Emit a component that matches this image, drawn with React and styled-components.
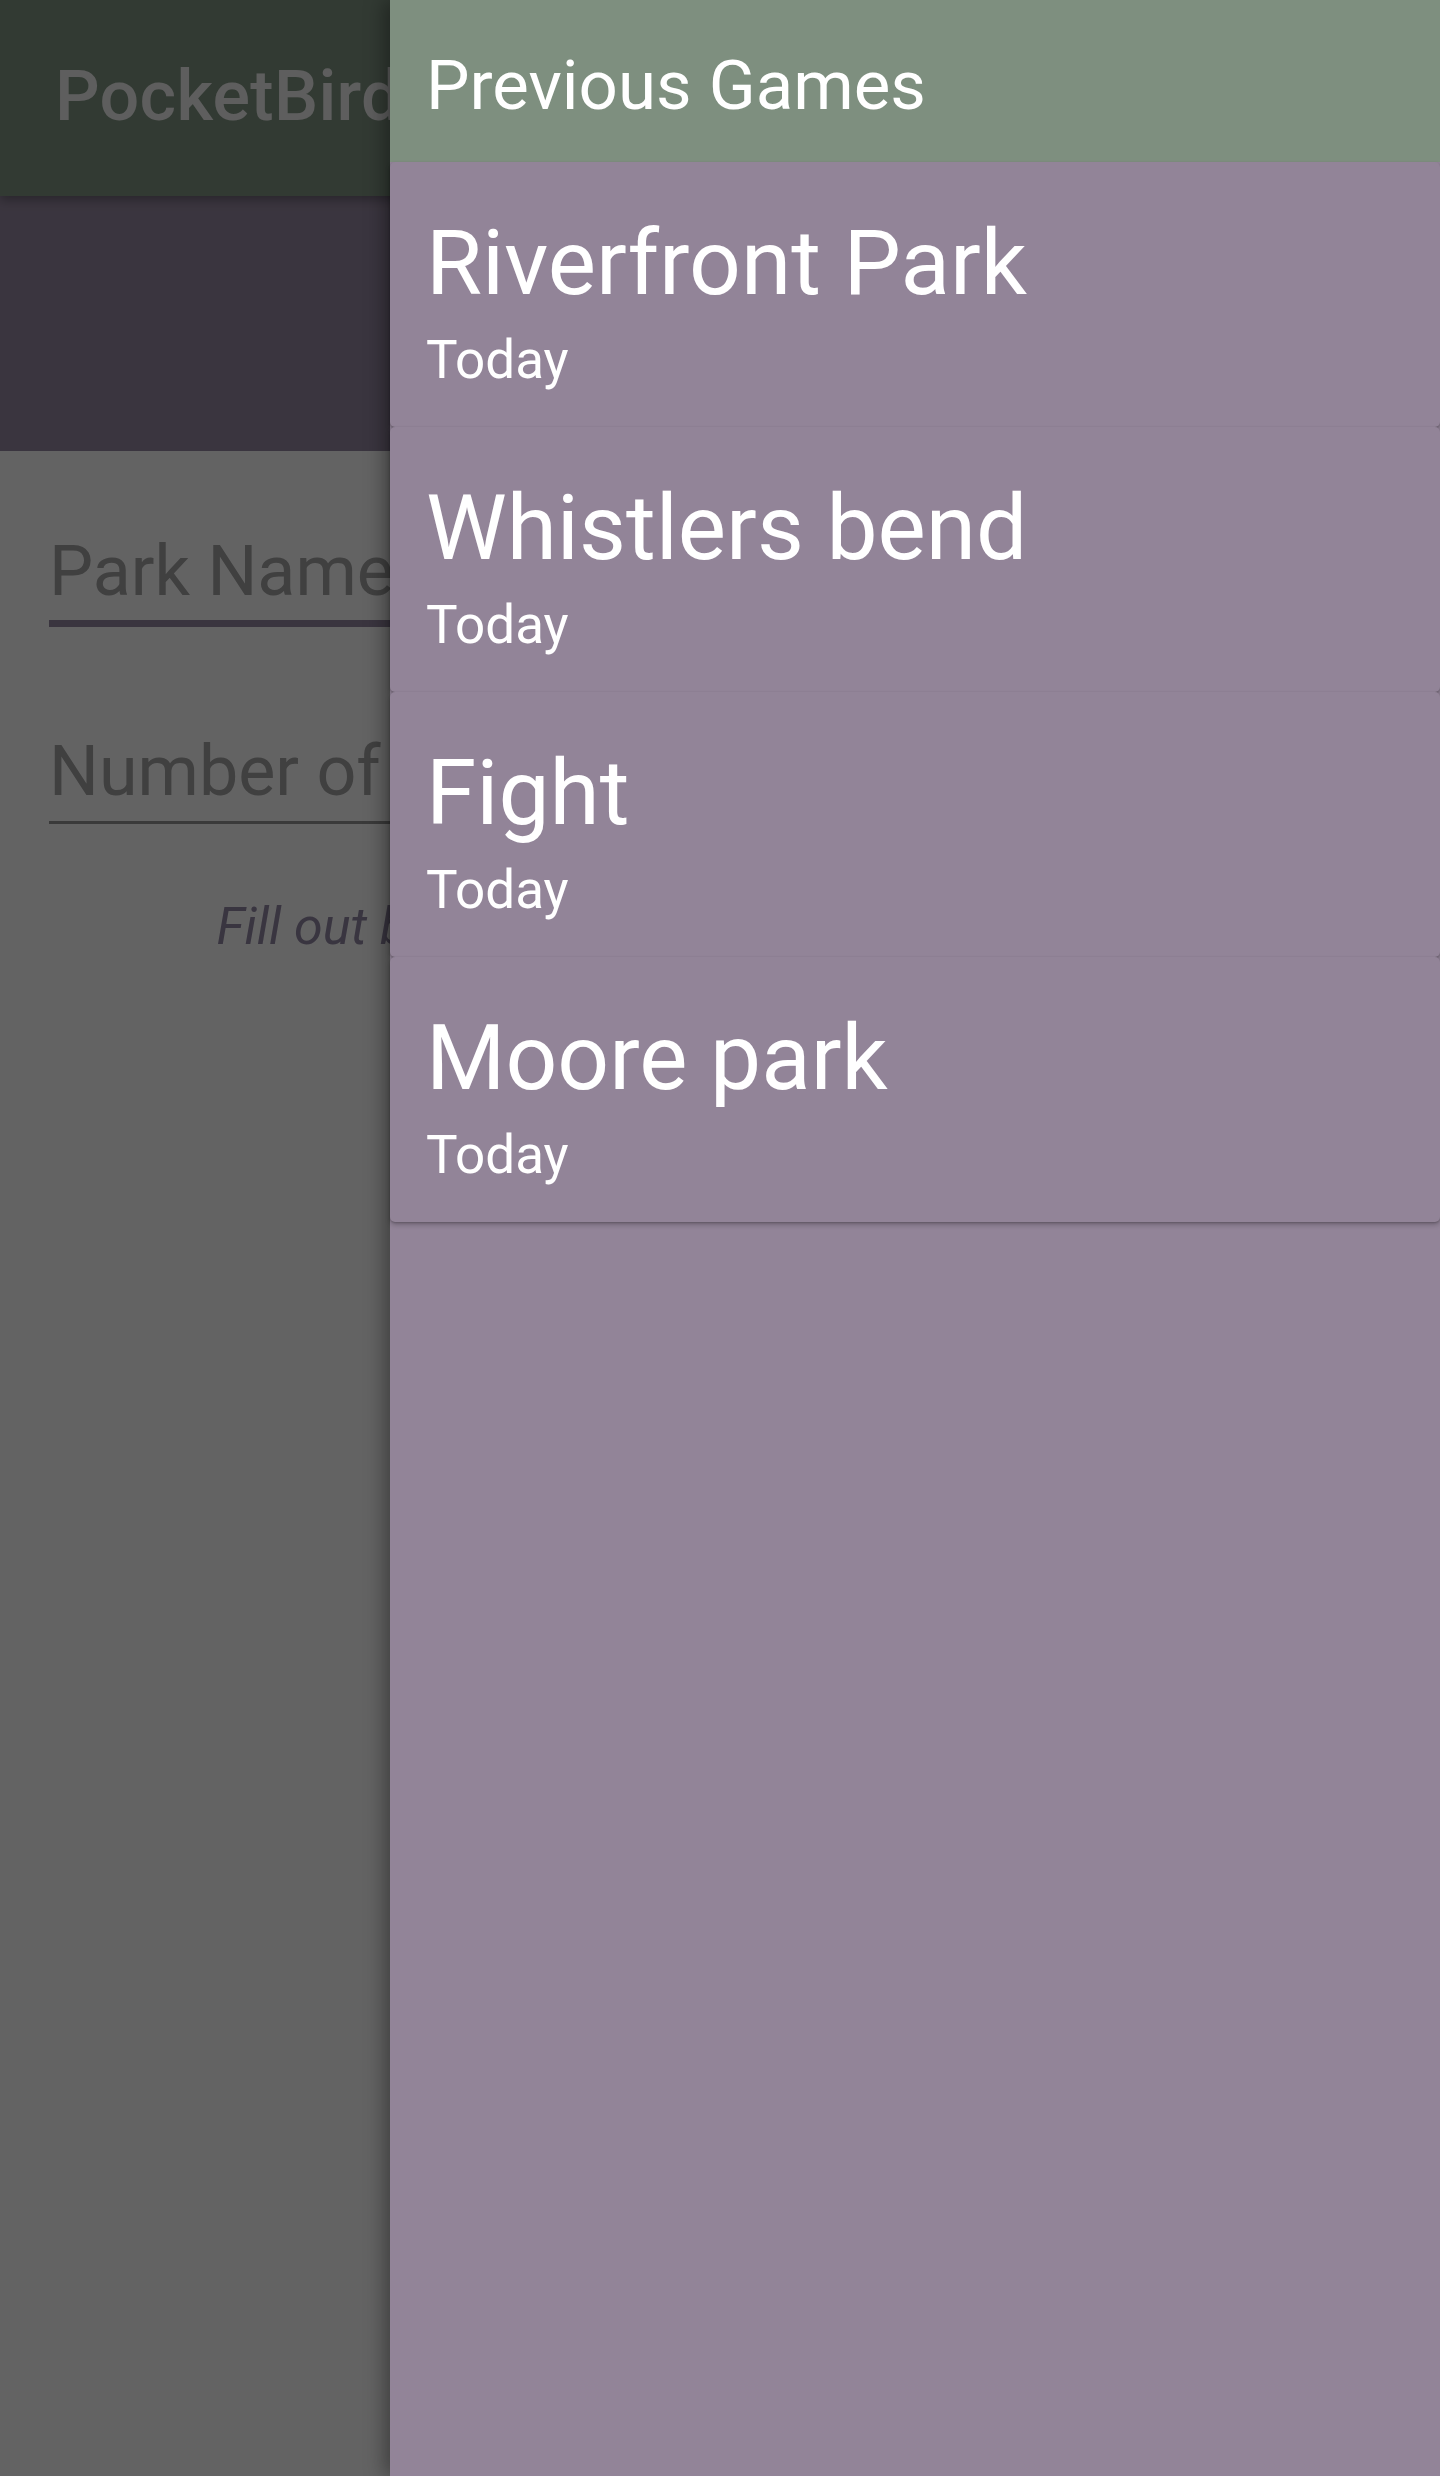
import React from "react";
import styled, { createGlobalStyle } from "styled-components";

const GlobalStyle = createGlobalStyle`
  html, body {
    margin: 0;
    padding: 0;
    background: #ffffff;
  }
  body {
    font-family: Roboto, "Noto Sans", "Liberation Sans", sans-serif;
    -webkit-font-smoothing: antialiased;
  }
  * {
    box-sizing: border-box;
  }
`;

const Screen = styled.div`
  position: relative;
  width: 1440px;
  height: 2476px;
  overflow: hidden;
  background: #ffffff;
`;

const MainView = styled.div`
  display: flex;
  flex-direction: column;
  height: 100%;
`;

// toolbar sits above the banner so its shadow shows
const AppBar = styled.header`
  position: relative;
  display: flex;
  align-items: center;
  height: 196px;
  padding: 0 0 4px 55px;
  background: #809583;
  box-shadow: 0 4px 10px rgba(0, 0, 0, 0.3);
`;

const AppTitle = styled.h1`
  margin: 0;
  font-size: 70px;
  font-weight: 500;
  color: #f2f2f2;
  letter-spacing: 0.3px;
`;

const Banner = styled.section`
  height: 255px;
  background: #978aa2;
`;

const Form = styled.div`
  display: flex;
  flex-direction: column;
  padding: 79px 49px 0;
`;

const Field = styled.label`
  display: block;
  margin-bottom: ${({ $gap }) => $gap}px;
  padding-bottom: ${({ $active }) => ($active ? "8px" : "9px")};
  border-bottom: ${({ $active }) => ($active ? "7px solid #978aa2" : "3px solid #959595")};
`;

const FieldInput = styled.input`
  display: block;
  width: 100%;
  border: 0;
  outline: none;
  padding: 0;
  background: transparent;
  font-family: Roboto, "Noto Sans", sans-serif;
  font-size: 70px;
  line-height: 82px;
  height: 82px;
  color: #222;
  &::placeholder {
    color: #a4a4a4;
  }
`;

const Hint = styled.p`
  margin: 0;
  text-align: center;
  font-style: italic;
  font-size: 52px;
  line-height: 61px;
  color: #948aa6;
`;

const Scrim = styled.div`
  position: absolute;
  inset: 0;
  background: rgba(0, 0, 0, 0.61);
`;

const Drawer = styled.aside`
  position: absolute;
  top: 0;
  right: 0;
  bottom: 0;
  width: 1050px;
  display: flex;
  flex-direction: column;
  background: #928498;
  box-shadow: -6px 0 18px rgba(0, 0, 0, 0.35);
`;

const DrawerHeader = styled.div`
  height: 162px;
  padding: 45px 36px 0;
  background: #7e8f7f;
  color: #ffffff;
  font-size: 69px;
  line-height: 81px;
`;

const GameList = styled.div`
  display: flex;
  flex-direction: column;
`;

const GameCard = styled.div`
  padding: 48px 36px 36px;
  background: #928498;
  border-radius: 5px;
  box-shadow: 0 3px 5px rgba(0, 0, 0, 0.22), 0 1px 2px rgba(0, 0, 0, 0.18);
  color: #ffffff;
`;

const GameName = styled.div`
  font-size: 91px;
  line-height: 107px;
`;

const GameDate = styled.div`
  margin-top: 12px;
  font-size: 53px;
  line-height: 62px;
`;

const games = [
  { name: "Riverfront Park", date: "Today" },
  { name: "Whistlers bend", date: "Today" },
  { name: "Fight", date: "Today" },
  { name: "Moore park", date: "Today" },
];

function App() {
  return (
    <Screen>
      <GlobalStyle />
      <MainView>
        <AppBar>
          <AppTitle>PocketBird</AppTitle>
        </AppBar>
        <Banner />
        <Form>
          <Field $active $gap={103}>
            <FieldInput placeholder="Park Name" readOnly />
          </Field>
          <Field $gap={72}>
            <FieldInput placeholder="Number of players" readOnly />
          </Field>
          <Hint>Fill out both fields above to start a new game</Hint>
        </Form>
      </MainView>
      <Scrim />
      <Drawer>
        <DrawerHeader>Previous Games</DrawerHeader>
        <GameList>
          {games.map((g) => (
            <GameCard key={g.name}>
              <GameName>{g.name}</GameName>
              <GameDate>{g.date}</GameDate>
            </GameCard>
          ))}
        </GameList>
      </Drawer>
    </Screen>
  );
}

export default App;
